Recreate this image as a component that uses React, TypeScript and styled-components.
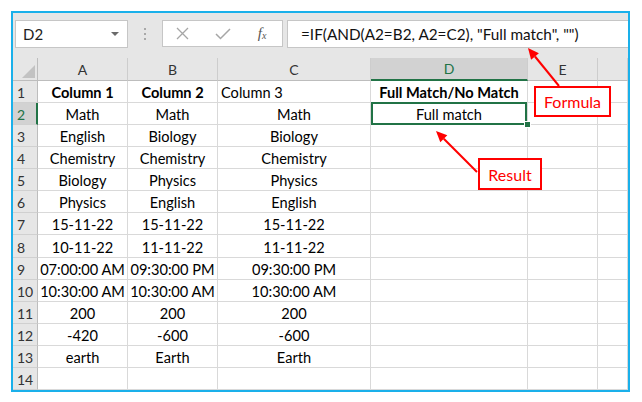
import React from "react";
import styled, { createGlobalStyle, css } from "styled-components";

const GlobalStyle = createGlobalStyle`
  html, body {
    margin: 0;
    padding: 0;
    background: #fff;
  }
  body {
    font-family: Lato, "Liberation Sans", sans-serif;
  }
`;

const Page = styled.div`
  position: relative;
  width: 642px;
  height: 402px;
  padding: 11px 0 0 11px;
  box-sizing: border-box;
`;

const Frame = styled.div`
  width: 619px;
  height: 381px;
  box-sizing: border-box;
  border: 2px solid #1ab0ea;
  background: #e6e6e6;
  display: flex;
  flex-direction: column;
`;

const FormulaBar = styled.div`
  height: 45px;
  flex-shrink: 0;
  display: flex;
  align-items: flex-start;
  padding: 7px 0 0 2px;
  box-sizing: border-box;
`;

const NameBox = styled.div`
  width: 113px;
  height: 28px;
  box-sizing: border-box;
  background: #fff;
  border: 1px solid #c6c6c6;
  display: flex;
  align-items: center;
  justify-content: space-between;
  padding: 0 8px 0 7px;
  font-size: 15px;
  color: #222;
`;

const Caret = styled.span`
  width: 0;
  height: 0;
  border-left: 4px solid transparent;
  border-right: 4px solid transparent;
  border-top: 4px solid #6a6a6a;
`;

const Grip = styled.div`
  width: 34px;
  height: 28px;
  display: flex;
  flex-direction: column;
  align-items: center;
  justify-content: center;
  gap: 3px;
  span {
    width: 2px;
    height: 2px;
    background: #a8a8a8;
  }
`;

const FnBox = styled.div`
  width: 121px;
  height: 27px;
  box-sizing: border-box;
  background: #fff;
  border: 1px solid #c6c6c6;
  display: flex;
  align-items: center;
`;

const FnSlot = styled.div`
  width: 40px;
  height: 100%;
  display: flex;
  align-items: center;
  justify-content: center;
`;

const Fx = styled.span`
  font-family: "Liberation Serif", serif;
  font-style: italic;
  font-size: 15px;
  color: #555;
  sub {
    font-size: 10px;
    vertical-align: baseline;
    position: relative;
    top: 1px;
  }
`;

const FormulaInput = styled.div`
  flex: 1;
  height: 28px;
  margin-left: 4px;
  box-sizing: border-box;
  background: #fff;
  border: 1px solid #c6c6c6;
  border-right: none;
  display: flex;
  align-items: center;
  padding-left: 13px;
  font-size: 15.3px;
  color: #111;
  white-space: nowrap;
`;

const Sheet = styled.div`
  flex: 1;
  display: grid;
  grid-template-columns: 25px 90px 90px 153px 157px 70px 1fr;
  grid-template-rows: 23px repeat(14, 1fr);
  background: #fff;
`;

const Corner = styled.div`
  background: #e6e6e6;
  border-right: 1px solid #bdbdbd;
  border-bottom: 1px solid #bdbdbd;
  display: flex;
  align-items: flex-end;
  justify-content: flex-end;
  padding: 0 2px 2px 0;
  &::after {
    content: "";
    width: 0;
    height: 0;
    border-left: 13px solid transparent;
    border-bottom: 13px solid #c2c2c2;
  }
`;

const ColHead = styled.div<{ $active?: boolean }>`
  background: #e6e6e6;
  border-right: 1px solid #cdcdcd;
  border-bottom: 1px solid #bdbdbd;
  display: flex;
  align-items: center;
  justify-content: center;
  font-size: 14px;
  color: #333;
  ${(p) =>
    p.$active &&
    css`
      background: #d2d2d2;
      color: #217346;
      border-bottom: 2px solid #217346;
    `}
`;

const RowHead = styled.div<{ $active?: boolean }>`
  background: #e6e6e6;
  border-right: 1px solid #bdbdbd;
  border-bottom: 1px solid #d0d0d0;
  display: flex;
  align-items: center;
  padding: 2px 0 0 4px;
  font-size: 14px;
  color: #333;
  ${(p) =>
    p.$active &&
    css`
      background: #d2d2d2;
      color: #217346;
      border-right: 2px solid #217346;
    `}
`;

const Cell = styled.div<{ $align?: string; $bold?: boolean; $selected?: boolean }>`
  position: relative;
  border-right: 1px solid #d9d9d9;
  border-bottom: 1px solid #d9d9d9;
  display: flex;
  align-items: center;
  justify-content: ${(p) => (p.$align === "left" ? "flex-start" : "center")};
  padding: 2px 3px 0;
  font-size: 14.6px;
  font-weight: ${(p) => (p.$bold ? 700 : 400)};
  color: #000;
  white-space: nowrap;
  ${(p) =>
    p.$selected &&
    css`
      &::after {
        content: "";
        position: absolute;
        inset: -1px 0 -1px 0;
        border: 2px solid #217346;
      }
      &::before {
        content: "";
        position: absolute;
        right: -4px;
        bottom: -4px;
        width: 5px;
        height: 5px;
        background: #217346;
        border: 1px solid #fff;
        z-index: 1;
      }
    `}
`;

const Tag = styled.div`
  position: absolute;
  box-sizing: border-box;
  border: 2px solid #ff0000;
  background: #fff;
  color: #ff0000;
  font-size: 16px;
  display: flex;
  align-items: center;
  justify-content: center;
`;

const Arrows = styled.svg`
  position: absolute;
  left: 0;
  top: 0;
  pointer-events: none;
`;

type CellDef = { v: string; bold?: boolean; align?: string };

const cols = ["A", "B", "C", "D", "E", ""];

const rows: CellDef[][] = [
  [
    { v: "Column 1", bold: true },
    { v: "Column 2", bold: true },
    { v: "Column 3", align: "left" },
    { v: "Full Match/No Match", bold: true },
  ],
  [{ v: "Math" }, { v: "Math" }, { v: "Math" }, { v: "Full match" }],
  [{ v: "English" }, { v: "Biology" }, { v: "Biology" }],
  [{ v: "Chemistry" }, { v: "Chemistry" }, { v: "Chemistry" }],
  [{ v: "Biology" }, { v: "Physics" }, { v: "Physics" }],
  [{ v: "Physics" }, { v: "English" }, { v: "English" }],
  [{ v: "15-11-22" }, { v: "15-11-22" }, { v: "15-11-22" }],
  [{ v: "10-11-22" }, { v: "11-11-22" }, { v: "11-11-22" }],
  [{ v: "07:00:00 AM" }, { v: "09:30:00 PM" }, { v: "09:30:00 PM" }],
  [{ v: "10:30:00 AM" }, { v: "10:30:00 AM" }, { v: "10:30:00 AM" }],
  [{ v: "200" }, { v: "200" }, { v: "200" }],
  [{ v: "-420" }, { v: "-600" }, { v: "-600" }],
  [{ v: "earth" }, { v: "Earth" }, { v: "Earth" }],
  [],
];

export default function App() {
  return (
    <Page>
      <GlobalStyle />
      <Frame>
        <FormulaBar>
          <NameBox>
            D2
            <Caret />
          </NameBox>
          <Grip>
            <span />
            <span />
            <span />
          </Grip>
          <FnBox>
            <FnSlot>
              <svg width="13" height="13" viewBox="0 0 13 13">
                <path d="M1 1 L12 12 M12 1 L1 12" stroke="#a6a6a6" strokeWidth="1.3" fill="none" />
              </svg>
            </FnSlot>
            <FnSlot>
              <svg width="16" height="12" viewBox="0 0 16 12">
                <path d="M1 6 L5.5 10.5 L15 1" stroke="#a6a6a6" strokeWidth="1.5" fill="none" />
              </svg>
            </FnSlot>
            <FnSlot>
              <Fx>
                f<sub>x</sub>
              </Fx>
            </FnSlot>
          </FnBox>
          <FormulaInput>=IF(AND(A2=B2, A2=C2), "Full match", "")</FormulaInput>
        </FormulaBar>
        <Sheet>
          <Corner />
          {cols.map((c, i) => (
            <ColHead key={i} $active={c === "D"}>
              {c}
            </ColHead>
          ))}
          {rows.map((r, ri) => (
            <React.Fragment key={ri}>
              <RowHead $active={ri === 1}>{ri + 1}</RowHead>
              {cols.map((_, ci) => {
                const cell = r[ci];
                return (
                  <Cell
                    key={ci}
                    $bold={cell?.bold}
                    $align={cell?.align}
                    $selected={ri === 1 && ci === 3}
                  >
                    {cell?.v}
                  </Cell>
                );
              })}
            </React.Fragment>
          ))}
        </Sheet>
      </Frame>

      <Tag style={{ left: 534, top: 86, width: 77, height: 31 }}>Formula</Tag>
      <Tag style={{ left: 478, top: 158, width: 64, height: 32 }}>Result</Tag>

      <Arrows width="642" height="402">
        <g stroke="#ff0000" strokeWidth="2" fill="#ff0000">
          <line x1="559" y1="86" x2="535" y2="56.5" />
          <polygon points="528,48 531.1,59.7 538.9,53.3" stroke="none" />
          <line x1="477" y1="172" x2="443.8" y2="138.8" />
          <polygon points="436,131 440.3,142.3 447.3,135.3" stroke="none" />
        </g>
      </Arrows>
    </Page>
  );
}
